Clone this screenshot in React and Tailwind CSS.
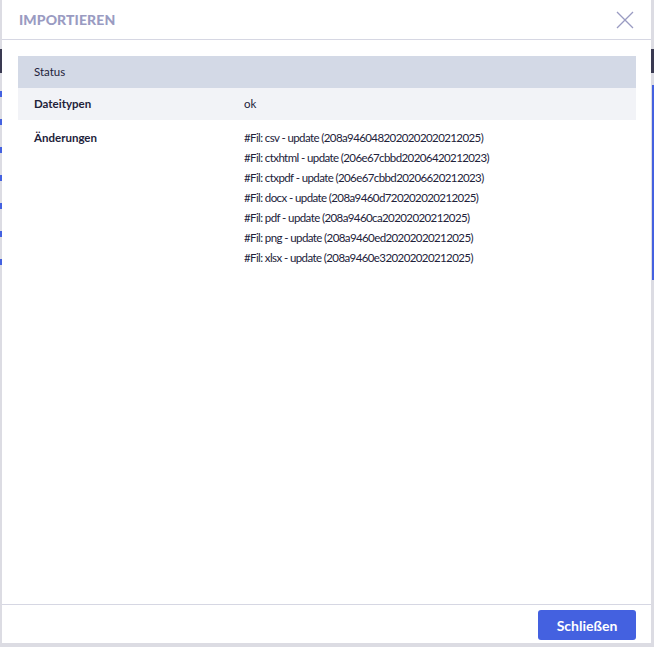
import React from 'react';

const changes = [
  '#Fil: csv - update (208a9460482020202020212025)',
  '#Fil: ctxhtml - update (206e67cbbd20206420212023)',
  '#Fil: ctxpdf - update (206e67cbbd20206620212023)',
  '#Fil: docx - update (208a9460d720202020212025)',
  '#Fil: pdf - update (208a9460ca20202020212025)',
  '#Fil: png - update (208a9460ed20202020212025)',
  '#Fil: xlsx - update (208a9460e320202020212025)',
];

const App = () => {
  return (
    <div
      className="relative w-[654px] h-[647px] overflow-hidden bg-[#dcdce3]"
      style={{ fontFamily: 'Lato, "Open Sans", sans-serif' }}
    >
      {/* page behind the dialog */}
      <div className="h-[49px]" />
      <div className="h-[24px] bg-[#3a3a52]" />
      <div className="flex justify-between pt-[12px]">
        <div className="flex flex-col gap-[22px] pt-[6px]">
          {[0, 1, 2, 3, 4, 5, 6].map((i) => (
            <div key={i} className="w-[2px] h-[6px] bg-[#4461e0]" />
          ))}
        </div>
        <div className="w-[2px] h-[195px] bg-[#4461e0]" />
      </div>

      {/* dialog */}
      <div className="absolute left-[2px] top-0 w-[649px] h-[643px] bg-white flex flex-col">
        <div className="h-[40px] flex items-center justify-between pl-[17px] pr-[17px] border-b border-[#d6d7e3]">
          <h2 className="text-[14px] font-black tracking-[0.1px] text-[#9a9bc2] uppercase">Importieren</h2>
          <button className="w-[18px] h-[18px] flex items-center justify-center text-[#9a9bc2]">
            <svg width="18" height="18" viewBox="0 0 18 18" fill="none" stroke="currentColor" strokeWidth="1.3">
              <path d="M1 1L17 17M17 1L1 17" />
            </svg>
          </button>
        </div>

        <div className="flex-1 pt-[16px] pl-[16px] pr-[15px] text-[11.5px] text-[#22223a]">
          <div className="h-[32px] flex items-center px-[16px] bg-[#d3d9e6]">Status</div>
          <div className="h-[32px] flex items-center px-[16px] bg-[#f2f3f7]">
            <div className="w-[210px] font-bold">Dateitypen</div>
            <div>ok</div>
          </div>
          <div className="flex px-[16px] py-[8px] leading-[20px]">
            <div className="w-[210px] font-bold">Änderungen</div>
            <div className="flex flex-col tracking-[-0.6px]">
              {changes.map((c) => (
                <div key={c}>{c}</div>
              ))}
            </div>
          </div>
        </div>

        <div className="h-[39px] border-t border-[#d6d7e3] flex justify-end items-start pt-[5px] pr-[15px]">
          <button className="h-[30px] w-[98px] rounded-[3px] bg-[#4461e0] text-white text-[14px] font-bold">
            Schließen
          </button>
        </div>
      </div>
    </div>
  );
};

export default App;
